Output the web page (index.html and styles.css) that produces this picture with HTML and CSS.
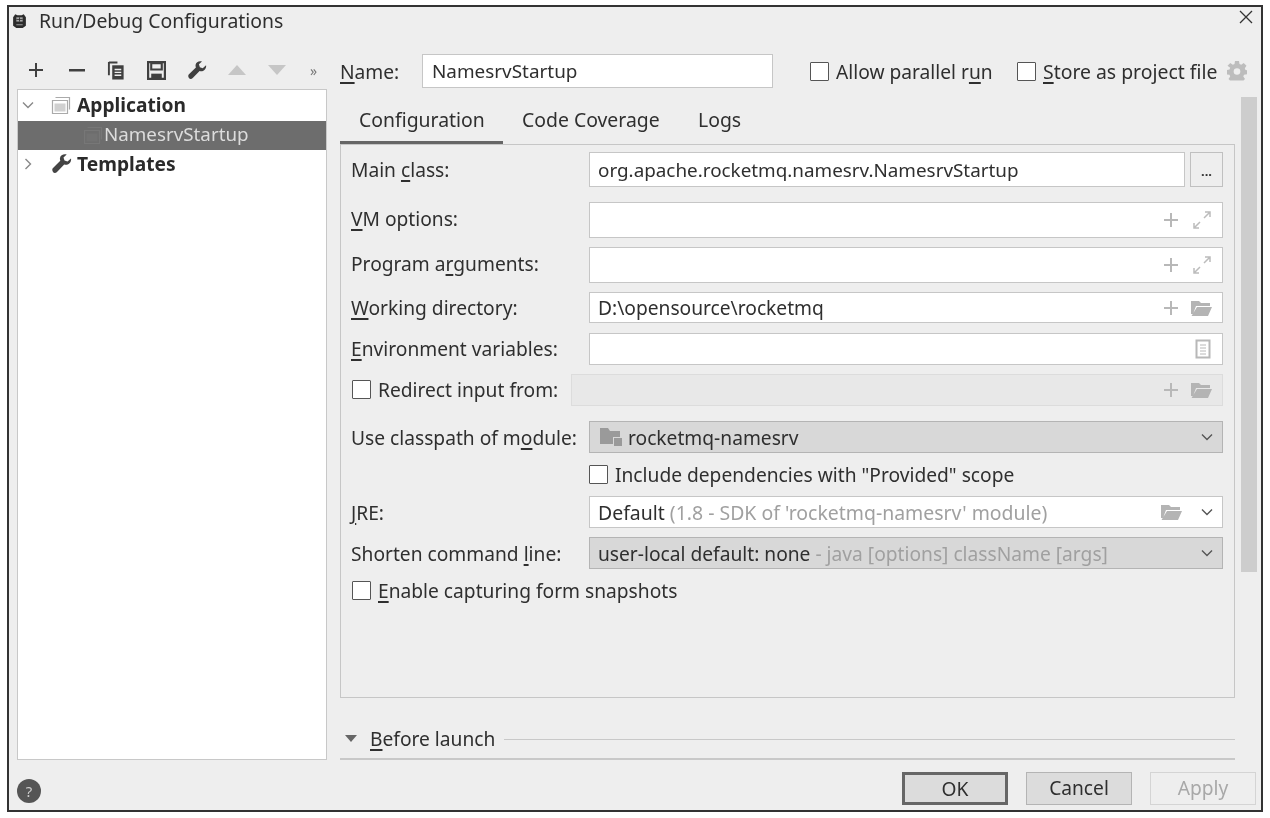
FILE: index.html
```html
<!DOCTYPE html>
<html lang="en">
<head>
<meta charset="utf-8">
<title>Run/Debug Configurations</title>
<link rel="stylesheet" href="styles.css">
</head>
<body>
<svg class="defs" width="0" height="0" aria-hidden="true">
  <symbol id="plus" viewBox="0 0 16 16"><path d="M8 1v14M1 8h14" fill="none" stroke="currentColor" stroke-width="2"/></symbol>
  <symbol id="expand" viewBox="0 0 20 20"><path d="M12 8l6-6M13 2h5v5M8 12l-6 6M2 13v5h5" fill="none" stroke="currentColor" stroke-width="1.5"/></symbol>
  <symbol id="folder" viewBox="0 0 23 17"><path d="M1 1h8l2 2h9v3H6L3 14H1z M7 7h15l-4 9H1.500z" fill="currentColor"/></symbol>
  <symbol id="doc" viewBox="0 0 16 20"><path d="M1.500 1.500h13v17h-13z" fill="none" stroke="currentColor" stroke-width="2"/><path d="M5 6h6M5 9h6M5 12h6M5 15h6" stroke="currentColor" stroke-width="1"/></symbol>
  <symbol id="chev" viewBox="0 0 12 8"><path d="M1 1.500l5 5 5-5" fill="none" stroke="currentColor" stroke-width="1.400"/></symbol>
  <symbol id="wrench" viewBox="0 0 20 20"><path d="M19 4.500l-3.500 3-3-1-1-3 3.200-3C11.500-.2 8.500 1 8 4c-.2 1 0 2 .3 2.800L1 14c-1 1-1 2.500 0 4s3 1 4 0l7.200-7.500c.9.300 1.900.4 2.800.2 3-.6 4.600-3.700 4-6.200z" fill="currentColor"/></symbol>
  <symbol id="appwin" viewBox="0 0 20 20"><path d="M4.500 2.500h14v12M1.500 5.500h15v13h-15z" fill="none" stroke="currentColor" stroke-width="1.200"/><path d="M3.500 8.500h11v8h-11z" fill="currentColor" opacity=".55"/></symbol>
</svg>

<main class="dialog">
  <header class="titlebar">
    <svg class="app-icon" viewBox="0 0 16 16" aria-hidden="true"><path d="M2 5l2-3 2 1h4l2-1 2 3v8l-3 2H5l-3-2z" fill="#2c2c2c"/><path d="M5 5h6v4H5z" fill="#aaa"/><path d="M5 7h6M8 5v4" stroke="#2c2c2c" stroke-width=".8"/><path d="M5 12h6" stroke="#999" stroke-width="1"/></svg>
    <h1 class="title">Run/Debug Configurations</h1>
    <svg class="close" viewBox="0 0 14 14" aria-hidden="true"><path d="M1 1l12 12M13 1L1 13" stroke="#333" stroke-width="1.300"/></svg>
  </header>

  <div class="body">
    <aside class="sidebar">
      <div class="toolbar">
        <svg class="tool-plus"><use href="#plus"/></svg>
        <svg class="tool-minus" viewBox="0 0 16 3"><rect width="16" height="2.500" fill="currentColor"/></svg>
        <svg class="tool-icon" viewBox="0 0 18 20"><path d="M1 1.500h9M1 1v14" stroke="currentColor" stroke-width="2" fill="none"/><path d="M4.500 4.500h12v15h-12z" fill="currentColor"/><path d="M7 9h7M7 12h7M7 15h7" stroke="#eee" stroke-width="1.500"/></svg>
        <svg class="tool-icon" viewBox="0 0 18 18"><path d="M1 1h16v16H1z" fill="none" stroke="currentColor" stroke-width="2.200"/><path d="M4 8h10V2H4z" fill="none" stroke="currentColor" stroke-width="2"/><path d="M4 12h10v5H4z" fill="currentColor"/></svg>
        <svg class="tool-icon"><use href="#wrench"/></svg>
        <svg class="tool-tri" viewBox="0 0 18 10"><path d="M9 0l9 10H0z" fill="currentColor"/></svg>
        <svg class="tool-tri" viewBox="0 0 18 10"><path d="M9 10L0 0h18z" fill="currentColor"/></svg>
        <span class="more">»</span>
      </div>
      <div class="tree">
        <div class="tree-row first">
          <svg class="tree-chev"><use href="#chev"/></svg>
          <svg class="tree-icon app"><use href="#appwin"/></svg>
          <span class="tree-group">Application</span>
        </div>
        <div class="tree-row selected">
          <svg class="tree-icon child"><use href="#appwin"/></svg>
          <span class="tree-child">NamesrvStartup</span>
        </div>
        <div class="tree-row">
          <svg class="tree-chev closed"><use href="#chev"/></svg>
          <svg class="tree-icon wrench"><use href="#wrench"/></svg>
          <span class="tree-group">Templates</span>
        </div>
      </div>
    </aside>

    <section class="content">
      <div class="name-row">
        <label class="name-label"><u>N</u>ame:</label>
        <div class="field name-field">NamesrvStartup</div>
        <label class="check allow"><span class="box"></span>Allow parallel r<u>u</u>n</label>
        <label class="check store"><span class="box"></span><span><u>S</u>tore as project file</span></label>
        <svg class="gear" viewBox="0 0 20 20"><path d="M8 0h4l.5 3 1.700.7L16.700 2l2.800 2.800-1.700 2.500.7 1.700 1.500.3v4l-3 .5-.7 1.700 1.700 2.500-1.500 1.500H3l-1.500-1.500 1.700-2.500-.7-1.700-3-.5V9l3-.5.700-1.700L.500 4.800 3.300 2l2.500 1.700L7.500 3z" fill="#bdbdbd"/><circle cx="10" cy="10.500" r="3.300" fill="#eee"/></svg>
      </div>

      <div class="split">
        <div class="main-col">
          <nav class="tabs">
            <span class="tab active">Configuration</span>
            <span class="tab">Code Coverage</span>
            <span class="tab">Logs</span>
          </nav>

          <div class="panel">
            <div class="row r-main">
              <label class="lbl">Main <u>c</u>lass:</label>
              <div class="field grow mainclass">org.apache.rocketmq.namesrv.NamesrvStartup</div>
              <button class="dots" type="button">...</button>
            </div>
            <div class="row r-vm">
              <label class="lbl"><u>V</u>M options:</label>
              <div class="field grow">
                <svg class="ic-plus"><use href="#plus"/></svg>
                <svg class="ic-exp"><use href="#expand"/></svg>
              </div>
            </div>
            <div class="row r-args">
              <label class="lbl">Program a<u>r</u>guments:</label>
              <div class="field grow">
                <svg class="ic-plus"><use href="#plus"/></svg>
                <svg class="ic-exp"><use href="#expand"/></svg>
              </div>
            </div>
            <div class="row r-dir">
              <label class="lbl"><u>W</u>orking directory:</label>
              <div class="field grow">D:\opensource\rocketmq
                <svg class="ic-plus"><use href="#plus"/></svg>
                <svg class="ic-folder"><use href="#folder"/></svg>
              </div>
            </div>
            <div class="row r-env">
              <label class="lbl"><u>E</u>nvironment variables:</label>
              <div class="field grow">
                <svg class="ic-doc"><use href="#doc"/></svg>
              </div>
            </div>
            <div class="row r-redirect">
              <label class="check lbl-auto"><span class="box"></span>Redirect input from:</label>
              <div class="field grow disabled">
                <svg class="ic-plus"><use href="#plus"/></svg>
                <svg class="ic-folder"><use href="#folder"/></svg>
              </div>
            </div>
            <div class="row r-module">
              <label class="lbl">Use classpath of m<u>o</u>dule:</label>
              <div class="field grow select">
                <svg class="ic-module" viewBox="0 0 22 18"><path d="M0 0h8l2 3h10v6h-7v7H0z" fill="#9a9a9a"/><rect x="14" y="10" width="8" height="8" fill="#9a9a9a"/></svg>
                <span>rocketmq-namesrv</span>
                <svg class="ic-chev"><use href="#chev"/></svg>
              </div>
            </div>
            <div class="row r-include">
              <label class="check"><span class="box"></span>Include dependencies with "Provided" scope</label>
            </div>
            <div class="row r-jre">
              <label class="lbl"><u>J</u>RE:</label>
              <div class="field grow jrefield">
                <span>Default <span class="muted">(1.8 - SDK of 'rocketmq-namesrv' module)</span></span>
                <svg class="ic-folder jre"><use href="#folder"/></svg>
                <svg class="ic-chev near"><use href="#chev"/></svg>
              </div>
            </div>
            <div class="row r-shorten">
              <label class="lbl">Shorten command <u>l</u>ine:</label>
              <div class="field grow select">
                <span>user-local default: none <span class="muted">- java [options] className [args]</span></span>
                <svg class="ic-chev"><use href="#chev"/></svg>
              </div>
            </div>
            <div class="row r-enable">
              <label class="check"><span class="box"></span><span><u>E</u>nable capturing form snapshots</span></label>
            </div>
          </div>

          <div class="before">
            <span class="tri-down"></span>
            <span><u>B</u>efore launch</span>
            <span class="rule"></span>
          </div>
          <div class="bottom-rule"></div>
        </div>
        <div class="scrollbar"><div class="thumb"></div></div>
      </div>
    </section>
  </div>

  <footer class="footer">
    <span class="help">?</span>
    <div class="actions">
      <button class="btn default" type="button">OK</button>
      <button class="btn" type="button">Cancel</button>
      <button class="btn off" type="button">Apply</button>
    </div>
  </footer>
</main>
</body>
</html>
```

FILE: styles.css
```css
* { box-sizing: border-box; }
html, body { margin: 0; padding: 0; background: #fff; }
body {
  width: 1270px;
  height: 818px;
  overflow: hidden;
  padding: 5px 7px 6px;
  font-family: "Noto Sans", "Liberation Sans", sans-serif;
  font-size: 19.200px;
  color: #2f2f2f;
}
.defs { position: absolute; }
svg { display: block; flex: none; }
u { text-underline-offset: 3px; text-decoration-thickness: 1.500px; }

.dialog {
  width: 1256px;
  height: 807px;
  border: 2px solid #333;
  background: #eee;
  display: flex;
  flex-direction: column;
  filter: blur(.35px);
}

.titlebar { height: 29px; display: flex; align-items: center; padding: 0 9px 0 2px; flex: none; margin-top: 1px; }
.app-icon { width: 17px; height: 17px; margin-right: 11px; margin-top: -4px; }
.title { flex: 1; margin: -4px 0 0; font-size: 19.400px; font-weight: 400; }
.close { width: 14px; height: 14px; margin-top: -12px; margin-right: -1px; }

.body { flex: 1; display: flex; min-height: 0; }

.sidebar { width: 331px; padding-left: 8px; display: flex; flex-direction: column; flex: none; }
.toolbar { height: 52px; padding: 14px 0 0 11px; display: flex; align-items: center; color: #404040; flex: none; }
.tool-plus { width: 16px; height: 16px; margin-right: 25px; }
.tool-minus { width: 16px; height: 3px; margin-right: 21.500px; }
.tool-icon { width: 19px; height: 19px; margin-right: 21.500px; }
.tool-tri { width: 18px; height: 10px; color: #c6c6c6; margin-right: 22px; }
.more { color: #777; font-size: 14px; margin-left: 2px; }

.tree { width: 310px; height: 671px; background: #fff; border: 1px solid #c8c8c8; flex: none; }
.tree-row { height: 29.500px; display: flex; align-items: center; position: relative; }
.tree-row.first { height: 30.500px; }
.tree-chev { width: 12px; height: 8px; margin-left: 4px; color: #888; }
.tree-chev.closed { transform: rotate(-90deg); }
.tree-icon { width: 20px; height: 20px; }
.tree-icon.app { margin-left: 17px; margin-right: 6px; color: #aaa; }
.tree-icon.wrench { margin-left: 18px; margin-right: 5px; color: #444; }
.tree-icon.child { margin-left: 65px; margin-right: 1px; color: #777; }
.tree-group { font-weight: 700; font-size: 19.200px; color: #2a2a2a; margin-top: -2px; }
.tree-child { margin-top: -2px; }
.tree-row.selected { background: #6d6d6d; color: #dcdcdc; height: 29px; font-size: 18.800px; }

.content { flex: 1; min-width: 0; display: flex; flex-direction: column; }

.name-row { height: 48px; display: flex; align-items: center; padding-top: 4px; flex: none; margin-top: 8px; }
.name-label { width: 82px; }
.field {
  background: #fff;
  border: 1px solid #c6c6c6;
  display: flex;
  align-items: center;
  padding-left: 8px;
  color: #2f2f2f;
  position: relative;
  white-space: nowrap;
}
.row .field { align-self: stretch; }
.name-field { width: 351px; height: 34px; padding-left: 9px; margin-right: 37px; font-size: 18.900px; }
.mainclass { font-size: 18.850px; }
.jrefield { font-size: 19.450px; }
.check { display: flex; align-items: center; white-space: nowrap; }
.box { width: 19px; height: 19px; background: #fff; border: 1.500px solid #555; border-radius: 1px; margin-right: 7px; flex: none; }
.allow { width: 207px; }
.store { width: 211px; }
.store span:last-child { font-size: 19.400px; }
.gear { width: 20px; height: 20px; margin-left: -1px; }

.split { flex: 1; display: flex; min-height: 0; margin-top: 1px; }
.main-col { width: 895px; flex: none; display: flex; flex-direction: column; }
.scrollbar { margin-left: 6px; width: 16px; padding-top: 3px; }
.thumb { height: 475px; background: #cdcdcd; }

.tabs { height: 48px; display: flex; flex: none; margin-top: 3px; font-size: 19.400px; }
.tab { display: flex; align-items: center; padding: 0 19px 3px; height: 47px; }
.tab.active { border-bottom: 3px solid #666; width: 163px; padding-bottom: 0; }
.tab:nth-child(2) { width: 176px; }

.panel { height: 554px; border: 1px solid #c6c6c6; padding: 7px 11px 0 10px; flex: none; margin-top: -1px; }
.row { display: flex; align-items: center; }
.lbl { width: 238px; flex: none; }
.grow { flex: 1; min-width: 0; }
.r-main { height: 35px; }
.r-vm { height: 36px; margin-top: 15px; }
.r-vm .lbl, .r-args .lbl { margin-top: -3px; }
.r-args { height: 36px; margin-top: 9px; }
.r-dir { height: 31px; margin-top: 9px; }
.r-env { height: 32px; margin-top: 10px; }
.r-env .lbl, .r-redirect .check { margin-top: -2px; }
.r-redirect { height: 32px; margin-top: 9px; }
.r-module { height: 32px; margin-top: 15px; }
.r-include { height: 30px; margin-top: 6px; padding-left: 238px; }
.r-jre { height: 32px; margin-top: 7px; }
.r-shorten { height: 32px; margin-top: 9px; }
.r-enable { height: 30px; margin-top: 6px; padding-left: 1px; }
.r-redirect .check { width: 220px; flex: none; padding-left: 1px; }
.r-redirect .box { margin-right: 7px; }

.dots { width: 33px; height: 35px; margin-left: 5px; border: 1px solid #c0c0c0; background: #eee; color: #333; font: 700 13px "Noto Sans", sans-serif; padding: 3px 0 0; }

.disabled { background: #e8e8e8; border-color: #dcdcdc; }
.select { background: #d8d8d8; border-color: #b4b4b4; }
.muted { color: #a0a0a0; }

.ic-plus { width: 16px; height: 16px; color: #b8b8b8; position: absolute; right: 43px; top: 50%; margin-top: -8px; }
.ic-exp { width: 20px; height: 20px; color: #bcbcbc; position: absolute; right: 10px; top: 50%; margin-top: -10px; }
.ic-folder { width: 23px; height: 17px; color: #b4b4b4; position: absolute; right: 9px; top: 50%; margin-top: -8px; }
.ic-folder.jre { right: 39px; }
.ic-doc { width: 16px; height: 20px; color: #b8b8b8; position: absolute; right: 11px; top: 50%; margin-top: -10px; }
.ic-chev { width: 12px; height: 8px; color: #555; position: absolute; right: 9px; top: 50%; margin-top: -4px; }
.ic-module { width: 22px; height: 18px; margin-right: 6px; margin-left: 2px; }

.before { height: 31px; margin-top: 25px; display: flex; align-items: center; flex: none; padding-left: 5px; }
.tri-down { width: 0; height: 0; border-left: 6px solid transparent; border-right: 6px solid transparent; border-top: 7px solid #666; margin-right: 13px; }
.rule { flex: 1; height: 1px; background: #c8c8c8; margin-left: 9px; margin-top: 2px; }
.bottom-rule { height: 2px; background: #c8c8c8; margin-top: 4px; flex: none; }

.footer { height: 52px; flex: none; display: flex; align-items: center; padding: 0 5px 0 8px; justify-content: space-between; }
.help { width: 24px; height: 24px; border-radius: 50%; background: #555; color: #ccc; font-size: 15px; display: flex; align-items: center; justify-content: center; margin-top: 13px; }
.actions { display: flex; gap: 18px; margin-top: 8px; }
.btn { width: 106px; height: 33px; border: 1px solid #b4b4b4; background: #dcdcdc; color: #2f2f2f; font: 19.200px "Noto Sans", sans-serif; padding: 0 0 2px; }
.btn.default { border: 3px solid #666; }
.btn.off { background: #eee; border-color: #d4d4d4; color: #a8a8a8; }
```
